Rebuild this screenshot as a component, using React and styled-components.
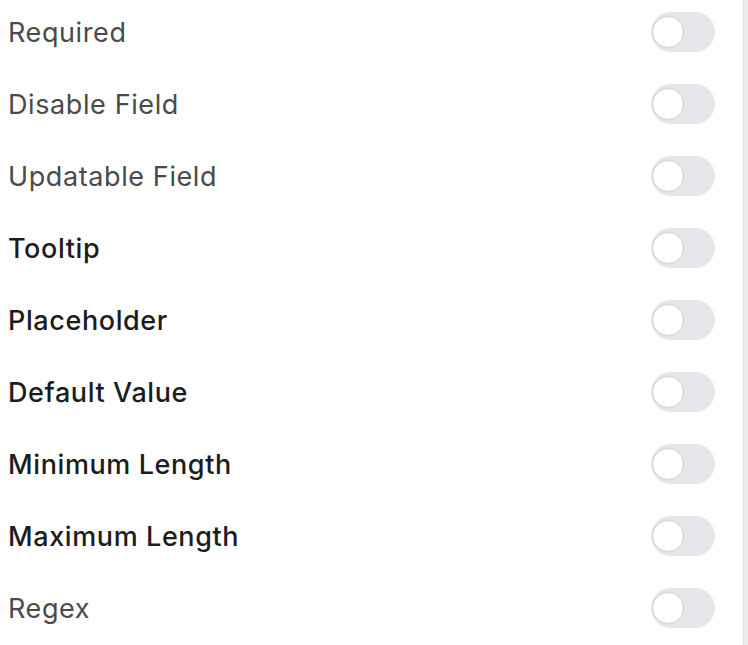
import React from 'react'
import styled, { createGlobalStyle } from 'styled-components'

const GlobalStyle = createGlobalStyle`
  html, body {
    margin: 0;
    padding: 0;
    background: #ffffff;
    font-family: Inter, "Noto Sans", sans-serif;
  }
`

const Page = styled.div`
  display: flex;
  height: 645px;
  overflow: hidden;
`

const Panel = styled.div`
  flex: 1;
  display: flex;
  flex-direction: column;
  gap: 32px;
  padding: 12px 28px 0 8px;
`

const Scrollbar = styled.div`
  width: 4px;
  background: #ececee;
  border-left: 1px solid #e2e2e5;
`

const Row = styled.div`
  display: flex;
  align-items: center;
  justify-content: space-between;
  height: 40px;
`

const Label = styled.span`
  font-size: 27px;
  line-height: 1;
  letter-spacing: 0.6px;
  font-weight: ${({ strong }) => (strong ? 500 : 400)};
  color: ${({ strong }) => (strong ? '#1c1c1e' : '#4a4a4c')};
`

const Track = styled.button`
  position: relative;
  width: 64px;
  height: 40px;
  padding: 0;
  border: none;
  border-radius: 20px;
  background: ${({ on }) => (on ? '#3b82f6' : '#e6e6ea')};
  cursor: pointer;
`

const Knob = styled.span`
  position: absolute;
  top: 4px;
  left: ${({ on }) => (on ? '28px' : '1px')};
  width: 30px;
  height: 30px;
  border-radius: 50%;
  background: #ffffff;
  border: 1.5px solid #cfcfd4;
`

const fields = [
  { label: 'Required' },
  { label: 'Disable Field' },
  { label: 'Updatable Field' },
  { label: 'Tooltip', strong: true },
  { label: 'Placeholder', strong: true },
  { label: 'Default Value', strong: true },
  { label: 'Minimum Length', strong: true },
  { label: 'Maximum Length', strong: true },
  { label: 'Regex' },
]

const Toggle = ({ on }) => (
  <Track on={on ? 1 : 0}>
    <Knob on={on ? 1 : 0} />
  </Track>
)

export default function App() {
  return (
    <>
      <GlobalStyle />
      <Page>
        <Panel>
          {fields.map((f) => (
            <Row key={f.label}>
              <Label strong={f.strong ? 1 : 0}>{f.label}</Label>
              <Toggle />
            </Row>
          ))}
        </Panel>
        <Scrollbar />
      </Page>
    </>
  )
}
